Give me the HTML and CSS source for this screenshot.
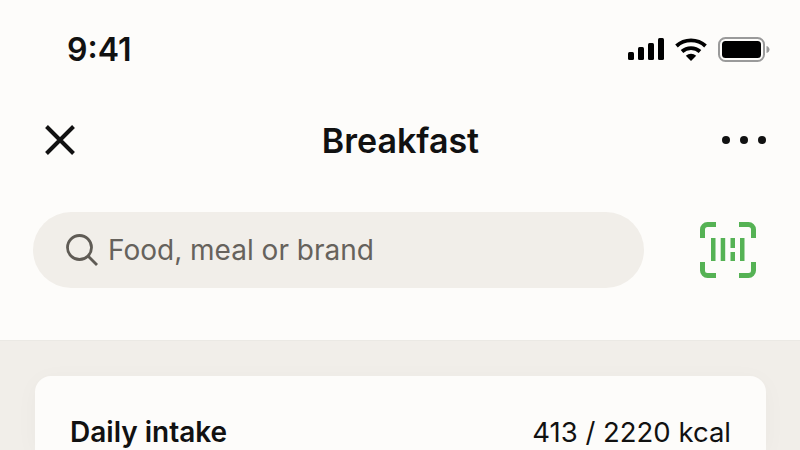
FILE: index.html
```html
<!DOCTYPE html>
<html lang="en">
<head>
  <meta charset="UTF-8">
  <title>Breakfast</title>
  <link rel="stylesheet" href="styles.css">
</head>
<body>
  <div class="top">
    <div class="status">
      <span class="time">9:41</span>
      <div class="status-icons">
        <svg width="36" height="24" viewBox="0 0 36 24"><g fill="#000"><rect x="0" y="14" width="6" height="8" rx="1.5"/><rect x="10" y="9" width="6" height="13" rx="1.5"/><rect x="20" y="5" width="6" height="17" rx="1.5"/><rect x="30" y="0" width="6" height="22" rx="1.5"/></g></svg>
        <svg width="32" height="24" viewBox="0 0 32 24"><g fill="none" stroke="#000" stroke-width="3.8"><path d="M1.5 8C9.5 .5 22.5 .5 30.5 8"/><path d="M7 13.5C12 9 20 9 25 13.5"/></g><path d="M10.8 17.8C13.8 15 18.2 15 21.2 17.8L16 23Z" fill="#000"/></svg>
        <svg class="battery" width="52" height="26" viewBox="0 0 52 26"><rect x="1" y="1" width="45" height="23" rx="6.5" fill="none" stroke="#9a9a9a" stroke-width="2"/><rect x="4" y="4" width="39" height="17" rx="3.5" fill="#000"/><path d="M48.5 9C50.5 9.5 51.5 11 51.5 12.5S50.5 15.5 48.5 16Z" fill="#9a9a9a"/></svg>
      </div>
    </div>

    <div class="nav">
      <svg class="close" width="30" height="30" viewBox="0 0 30 30"><path d="M1.5 1.5L28.5 28.5M28.5 1.5L1.5 28.5" stroke="#111" stroke-width="4" fill="none"/></svg>
      <h1>Breakfast</h1>
      <div class="more"><span></span><span></span><span></span></div>
    </div>

    <div class="search-row">
      <div class="search">
        <svg width="34" height="34" viewBox="0 0 34 34"><circle cx="14.5" cy="14.5" r="12" fill="none" stroke="#5f5b55" stroke-width="2.8"/><path d="M23 23L32 32" stroke="#5f5b55" stroke-width="2.8" fill="none"/></svg>
        <span>Food, meal or brand</span>
      </div>
      <svg class="scan" width="56" height="56" viewBox="0 0 56 56">
        <g fill="none" stroke="#55b254" stroke-width="5">
          <path d="M2.5 16V7.5a5 5 0 0 1 5-5H16"/>
          <path d="M39 2.5H48.5a5 5 0 0 1 5 5V16"/>
          <path d="M2.5 40V48.5a5 5 0 0 0 5 5H16"/>
          <path d="M53.5 40V48.5a5 5 0 0 1-5 5H39"/>
        </g>
        <g fill="#55b254">
          <rect x="11" y="16" width="4.5" height="23"/>
          <rect x="20.7" y="16" width="4.5" height="23"/>
          <rect x="30.5" y="16" width="4.5" height="10"/>
          <rect x="30.5" y="30" width="4.5" height="9"/>
          <rect x="40" y="16" width="4.5" height="23"/>
        </g>
      </svg>
    </div>
  </div>

  <div class="content">
    <div class="card">
      <div class="intake">
        <strong>Daily intake</strong>
        <span>413 / 2220 kcal</span>
      </div>
    </div>
  </div>
</body>
</html>
```

FILE: styles.css
```css
html, body {
  height: 100%;
}

body {
  margin: 0;
  overflow: hidden;
  font-family: 'Inter', 'Lato', sans-serif;
  background: #f1eee9;
  color: #111;
  display: flex;
  flex-direction: column;
}

.top {
  height: 341px;
  flex-shrink: 0;
  background: #fdfcfa;
  border-bottom: 1px solid #ebe9e4;
  box-sizing: border-box;
}

.status {
  height: 99px;
  padding: 0 30px 0 67px;
  display: flex;
  justify-content: space-between;
  align-items: center;
}

.time {
  font-size: 32px;
  font-weight: 600;
}

.status-icons {
  display: flex;
  align-items: center;
  gap: 11px;
}

.nav {
  height: 82px;
  padding: 0 34px 0 45px;
  display: flex;
  justify-content: space-between;
  align-items: center;
}

h1 {
  margin: 0 0 0 4px;
  font-size: 34px;
  font-weight: 600;
}

.more {
  display: flex;
  gap: 10px;
}

.more span {
  width: 8px;
  height: 8px;
  border-radius: 50%;
  background: #111;
}

.search-row {
  margin-top: 31px;
  padding: 0 44px 0 33px;
  display: flex;
  justify-content: space-between;
  align-items: center;
}

.search {
  width: 611px;
  height: 76px;
  box-sizing: border-box;
  padding-left: 32px;
  border-radius: 38px;
  background: #f1eee9;
  display: flex;
  align-items: center;
  gap: 9px;
  font-size: 28px;
  color: #66625c;
}

.content {
  flex: 1;
  min-height: 0;
  overflow: hidden;
  padding: 35px 34px 0 35px;
}

.card {
  height: 100%;
  background: #fdfcfa;
  border-radius: 16px 16px 0 0;
  box-shadow: 0 4px 24px rgba(0, 0, 0, 0.03);
  padding: 39px 35px 0;
  box-sizing: border-box;
}

.intake {
  display: flex;
  justify-content: space-between;
  font-size: 28px;
}

.intake strong {
  font-weight: 600;
}

.intake span {
  font-size: 27.5px;
}
```
